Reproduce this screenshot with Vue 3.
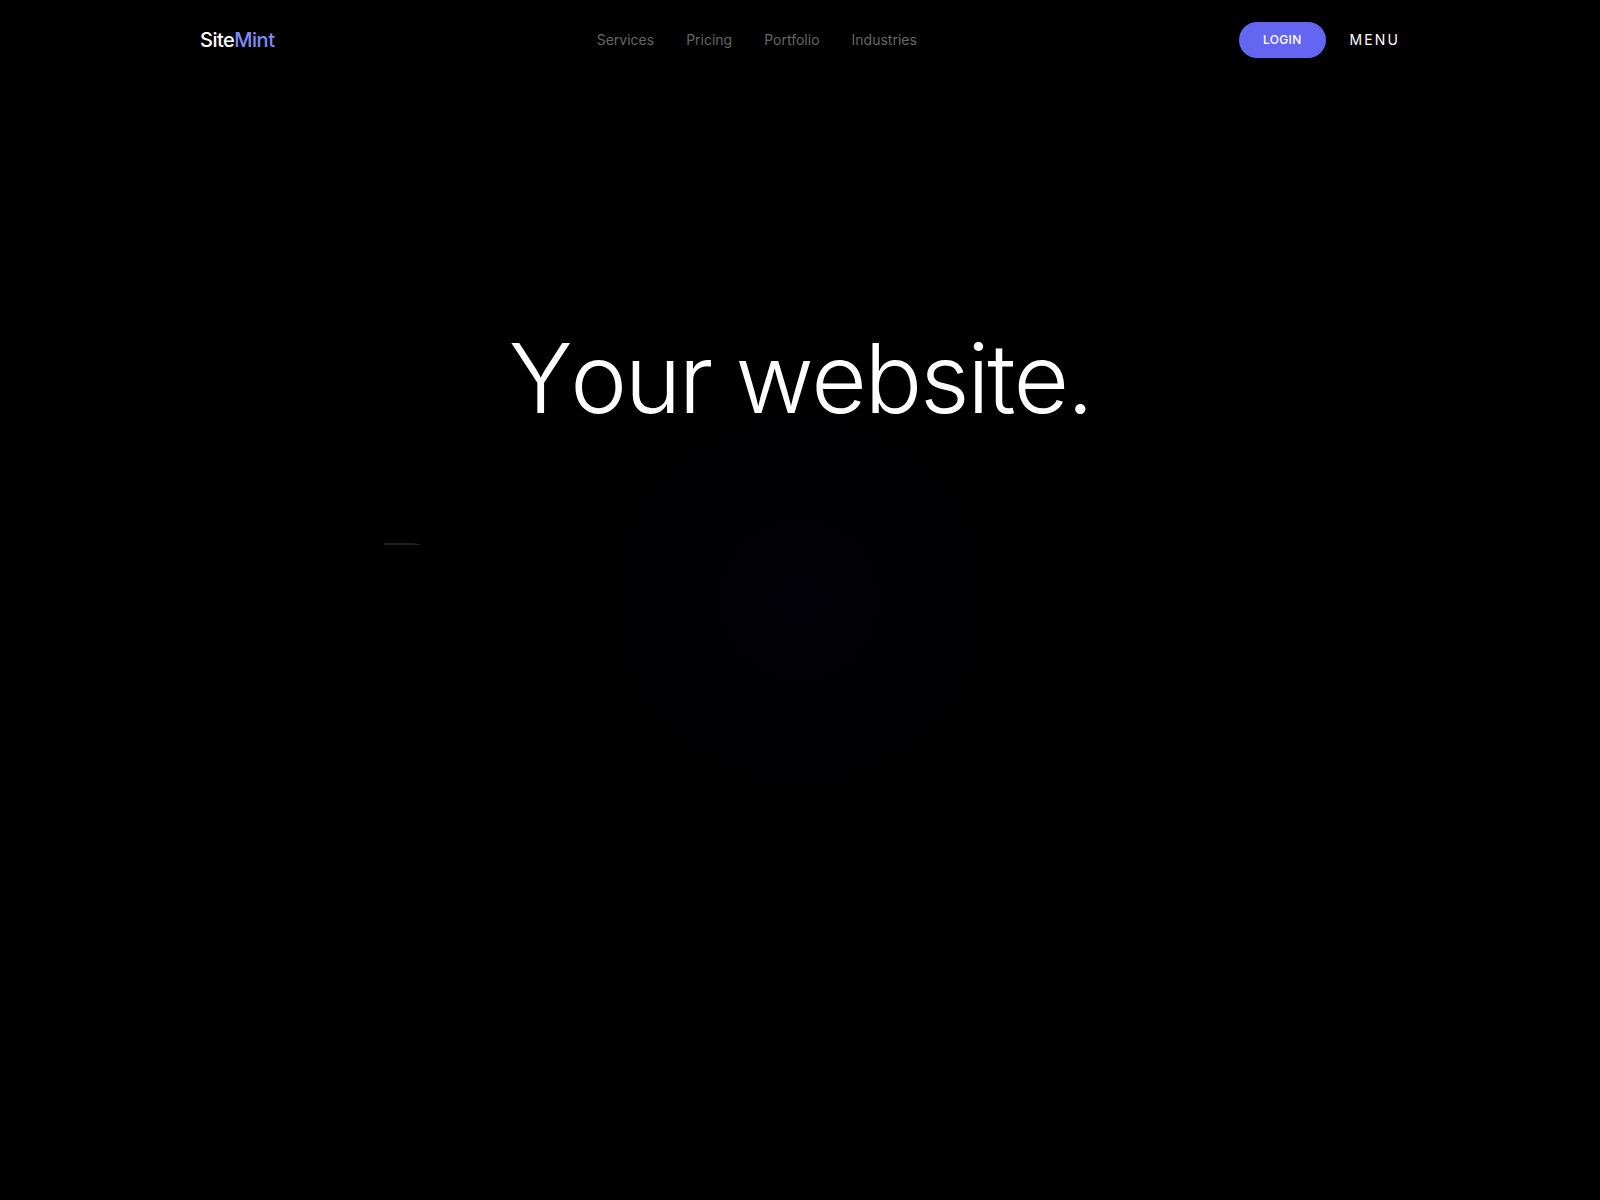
<script setup>
const links = ['Services', 'Pricing', 'Portfolio', 'Industries']
</script>

<template>
  <div class="page">
    <header class="bar">
      <a class="logo" href="#">Site<span class="accent">Mint</span></a>
      <nav class="links" aria-label="Main">
        <a v-for="link in links" :key="link" href="#">{{ link }}</a>
      </nav>
      <div class="actions">
        <button class="login" type="button">LOGIN</button>
        <button class="menu" type="button">MENU</button>
      </div>
    </header>
    <main class="hero">
      <h1>Your website.</h1>
      <div class="reveal"></div>
    </main>
  </div>
</template>

<style>
body {
  margin: 0;
  background: #000;
}
</style>

<style scoped>
.page {
  min-height: 100vh;
  background: radial-gradient(circle at 50% 50%, #030208 0, #010104 120px, #000 240px);
  color: #fff;
  font-family: Inter, sans-serif;
}
.bar {
  display: flex;
  align-items: center;
  justify-content: space-between;
  box-sizing: border-box;
  max-width: 1200px;
  height: 80px;
  margin: 0 auto;
}
a {
  color: inherit;
  text-decoration: none;
}
.logo {
  font-size: 20px;
  font-weight: 500;
  line-height: 24px;
  letter-spacing: -0.025em;
}
.accent {
  color: #818cf8;
}
.links {
  display: flex;
  gap: 32px;
  color: #666;
  font-size: 14px;
  line-height: 20px;
}
.actions {
  display: flex;
  align-items: center;
  gap: 24px;
}
button {
  border: 0;
  color: #fff;
  font-family: inherit;
  cursor: pointer;
}
.login {
  height: 36px;
  padding: 0 24px 2px;
  border-radius: 18px;
  background: #6366f1;
  font-size: 12px;
  font-weight: 500;
  letter-spacing: 0.025em;
}
.menu {
  padding: 0 0 2px;
  background: none;
  font-size: 14px;
  letter-spacing: 0.15em;
}
.hero {
  max-width: 832px;
  margin: 0 auto;
  padding-top: 240px;
}
h1 {
  margin: 0;
  font-size: 96px;
  font-weight: 300;
  font-kerning: none;
  line-height: 116px;
  letter-spacing: -0.025em;
  text-align: center;
}
.reveal {
  width: 36px;
  height: 2px;
  margin-top: 107px;
  border-top-right-radius: 12px 2px;
  background: #222;
}
</style>
